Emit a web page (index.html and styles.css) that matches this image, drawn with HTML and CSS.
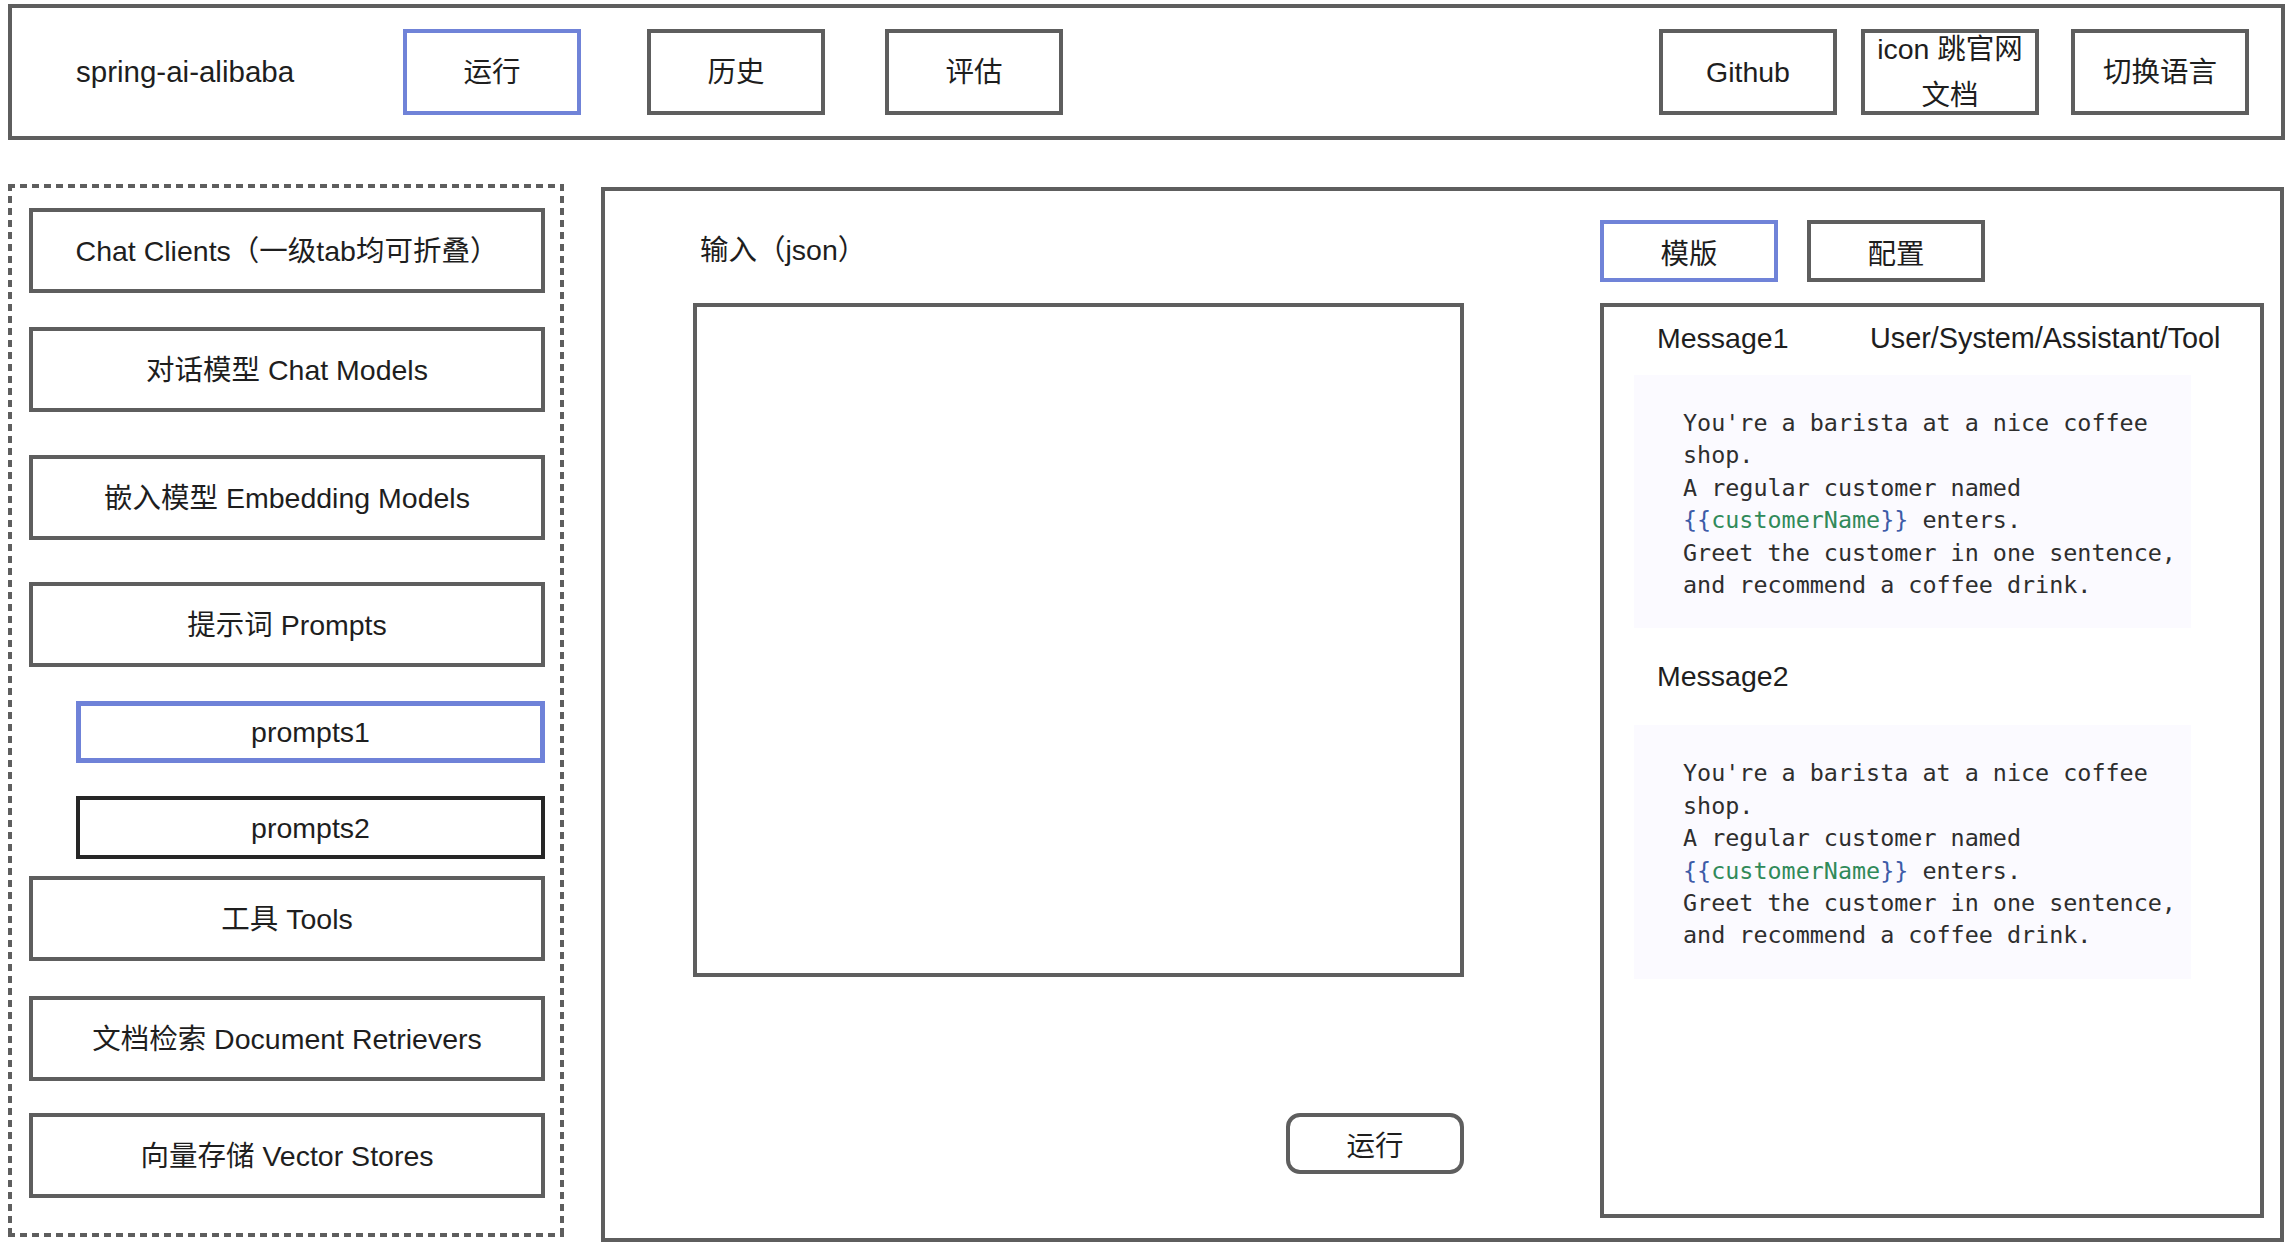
FILE: index.html
```html
<!DOCTYPE html>
<html lang="zh-CN">
<head>
<meta charset="utf-8">
<title>spring-ai-alibaba</title>
<link rel="stylesheet" href="styles.css">
</head>
<body>
<div class="page">
  <header class="topbar">
    <div class="brand">spring-ai-alibaba</div>
    <nav class="nav nav-left">
      <div class="btn btn-active">运行</div>
      <div class="btn nav-history">历史</div>
      <div class="btn nav-eval">评估</div>
    </nav>
    <nav class="nav nav-right">
      <div class="btn">Github</div>
      <div class="btn btn-two nav-docs">icon 跳官网 文档</div>
      <div class="btn nav-lang">切换语言</div>
    </nav>
  </header>

  <div class="workspace">
    <aside class="sidebar">
      <div class="side-item">Chat Clients（一级tab均可折叠）</div>
      <div class="side-item">对话模型 Chat Models</div>
      <div class="side-item">嵌入模型 Embedding Models</div>
      <div class="side-item">提示词 Prompts</div>
      <div class="side-item sub sub-active">prompts1</div>
      <div class="side-item sub sub-dark">prompts2</div>
      <div class="side-item">工具 Tools</div>
      <div class="side-item">文档检索 Document Retrievers</div>
      <div class="side-item">向量存储 Vector Stores</div>
    </aside>

    <main class="panel">
      <section class="input-col">
        <div class="label">输入（json）</div>
        <div class="json-box"></div>
        <div class="run-btn">运行</div>
      </section>
      <section class="config-col">
        <div class="tabs">
          <div class="tab tab-active">模版</div>
          <div class="tab">配置</div>
        </div>
        <div class="template">
          <div class="msg-head">
            <span class="msg-name">Message1</span>
            <span class="msg-role">User/System/Assistant/Tool</span>
          </div>
          <div class="code">
            <div class="line">You're a barista at a nice coffee</div>
            <div class="line">shop.</div>
            <div class="line">A regular customer named</div>
            <div class="line"><span class="brace">{{</span><span class="var">customerName</span><span class="brace">}}</span> enters.</div>
            <div class="line">Greet the customer in one sentence,</div>
            <div class="line">and recommend a coffee drink.</div>
          </div>
          <div class="msg-head msg-head-2">
            <span class="msg-name">Message2</span>
          </div>
          <div class="code code-2">
            <div class="line">You're a barista at a nice coffee</div>
            <div class="line">shop.</div>
            <div class="line">A regular customer named</div>
            <div class="line"><span class="brace">{{</span><span class="var">customerName</span><span class="brace">}}</span> enters.</div>
            <div class="line">Greet the customer in one sentence,</div>
            <div class="line">and recommend a coffee drink.</div>
          </div>
        </div>
      </section>
    </main>
  </div>
</div>
</body>
</html>
```

FILE: styles.css
```css
* { box-sizing: border-box; }

body {
  margin: 0;
  background: #ffffff;
  font-family: "Liberation Sans", "Noto Sans CJK SC", sans-serif;
  font-size: 28.5px;
  color: #1e1e1e;
}

.page {
  padding: 4px 11px 0 8px;
}

/* ---------- top bar ---------- */
.topbar {
  height: 136px;
  border: 4px solid #5e5e5e;
  display: flex;
  align-items: center;
  padding: 0 32px 0 64px;
}

.brand {
  width: 327px;
  line-height: 40px;
  font-size: 29.5px;
}

.nav {
  display: flex;
  align-items: center;
}

.nav-right {
  margin-left: auto;
}

.btn {
  width: 178px;
  height: 86px;
  border: 4px solid #5e5e5e;
  display: flex;
  align-items: center;
  justify-content: center;
  text-align: center;
  line-height: 40px;
}

.btn-active { border-color: #7083d8; }
.nav-history { margin-left: 66px; }
.nav-eval { margin-left: 60px; }
.nav-docs { margin-left: 24px; }
.nav-lang { margin-left: 32px; }

.btn-two {
  line-height: 46px;
  padding: 0 10px;
}

/* ---------- workspace ---------- */
.workspace {
  display: flex;
  align-items: flex-start;
}

.sidebar {
  margin-top: 44px;
  width: 556px;
  height: 1053px;
  padding: 24px 19px 0 21px;
  display: flex;
  flex-direction: column;
  background:
    repeating-linear-gradient(90deg, #5e5e5e 0 7px, transparent 7px 12px) left top / 100% 4px no-repeat,
    repeating-linear-gradient(90deg, #5e5e5e 0 7px, transparent 7px 12px) left bottom / 100% 4px no-repeat,
    repeating-linear-gradient(180deg, #5e5e5e 0 7px, transparent 7px 12px) left top / 4px 100% no-repeat,
    repeating-linear-gradient(180deg, #5e5e5e 0 7px, transparent 7px 12px) right top / 4px 100% no-repeat;
}

.side-item {
  width: 516px;
  height: 85px;
  border: 4px solid #5e5e5e;
  display: flex;
  align-items: center;
  justify-content: center;
  line-height: 40px;
}

.side-item:nth-child(2) { margin-top: 34px; }
.side-item:nth-child(3) { margin-top: 43px; }
.side-item:nth-child(4) { margin-top: 42px; }
.side-item:nth-child(5) { margin-top: 34px; }
.side-item:nth-child(6) { margin-top: 33px; }
.side-item:nth-child(7) { margin-top: 17px; }
.side-item:nth-child(8) { margin-top: 35px; }
.side-item:nth-child(9) { margin-top: 32px; }

.sub {
  margin-left: 47px;
  width: 469px;
  height: 62px;
}

.sub-active {
  border: 5px solid #6f82d8;
}

.sub-dark {
  border-color: #262626;
  height: 63px;
}

/* ---------- main panel ---------- */
.panel {
  margin-top: 47px;
  margin-left: 37px;
  width: 1683px;
  height: 1055px;
  border: 4px solid #5e5e5e;
  display: flex;
}

.input-col {
  margin-left: 88px;
  width: 771px;
  padding-top: 39px;
  display: flex;
  flex-direction: column;
}

.label {
  height: 40px;
  line-height: 40px;
  padding-left: 7px;
}

.json-box {
  margin-top: 33px;
  height: 674px;
  border: 4px solid #5e5e5e;
}

.run-btn {
  align-self: flex-end;
  margin-top: 136px;
  width: 178px;
  height: 61px;
  border: 4px solid #5e5e5e;
  border-radius: 14px;
  display: flex;
  align-items: center;
  justify-content: center;
}

.config-col {
  margin-left: 136px;
  width: 664px;
  padding-top: 29px;
}

.tabs {
  display: flex;
  gap: 29px;
}

.tab {
  width: 178px;
  height: 62px;
  border: 4px solid #5e5e5e;
  display: flex;
  align-items: center;
  justify-content: center;
}

.tab-active { border-color: #7083d8; }

.template {
  margin-top: 21px;
  height: 915px;
  border: 4px solid #5e5e5e;
  padding-top: 11px;
}

.msg-head {
  display: flex;
  padding-left: 53px;
  line-height: 40px;
  height: 40px;
}

.msg-name {
  width: 213px;
}

.msg-role {
  font-size: 28.8px;
}

.msg-head-2 {
  margin-top: 28px;
}

.code {
  margin: 17px 0 0 30px;
  width: 557px;
  padding: 32px 0 27px 49px;
  background: #fbfaff;
  font-family: "DejaVu Sans Mono", "Liberation Mono", monospace;
  font-size: 23.4px;
  line-height: 32.4px;
  color: #2e2e2e;
}

.line {
  white-space: pre;
  height: 32.4px;
}

.code-2 {
  margin-top: 29px;
}

.brace { color: #3d5ba8; }
.var { color: #318a5a; }
```
